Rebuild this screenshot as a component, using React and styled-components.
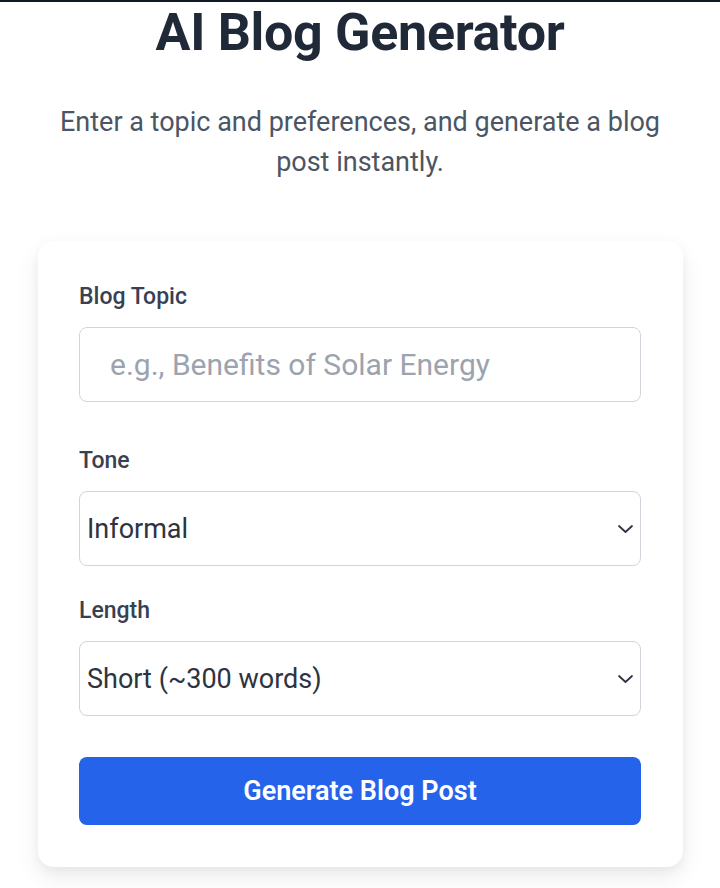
import React, { useState } from 'react';
import styled, { createGlobalStyle } from 'styled-components';

const GlobalStyle = createGlobalStyle`
  html, body {
    margin: 0;
    padding: 0;
    background: #ffffff;
    font-family: Roboto, "Liberation Sans", Arial, sans-serif;
  }
  * { box-sizing: border-box; }
`;

const Page = styled.div`
  width: 720px;
  min-height: 888px;
  border-top: 2px solid #111827;
  display: flex;
  flex-direction: column;
  align-items: center;
`;

const Title = styled.h1`
  margin: 0;
  font-size: 52px;
  line-height: 62px;
  font-weight: 700;
  color: #1f2937;
  letter-spacing: -0.3px;
`;

const Subtitle = styled.p`
  margin: 38px 0 0;
  width: 620px;
  text-align: center;
  font-size: 27px;
  line-height: 40px;
  color: #4b5563;
`;

const Card = styled.form`
  margin-top: 59px;
  width: 645px;
  margin-left: 1px;
  background: #ffffff;
  border-radius: 16px;
  box-shadow: 0 10px 25px rgba(0, 0, 0, 0.08), 0 4px 10px rgba(0, 0, 0, 0.04);
  padding: 41px 42px 42px 41px;
  display: flex;
  flex-direction: column;
`;

const Field = styled.div`
  display: flex;
  flex-direction: column;
  margin-bottom: ${({ gap }) => gap}px;
`;

const Label = styled.label`
  font-size: 23px;
  line-height: 30px;
  font-weight: 500;
  color: #374151;
  margin-bottom: 15px;
`;

const TextInput = styled.input`
  height: 75px;
  border: 1px solid #d1d5db;
  border-radius: 8px;
  padding: 0 30px;
  font-family: inherit;
  font-size: 30px;
  color: #111827;
  outline: none;
  &::placeholder {
    color: #9ca3af;
  }
`;

const SelectWrap = styled.div`
  position: relative;
  height: 75px;
`;

const Select = styled.select`
  appearance: none;
  width: 100%;
  height: 100%;
  border: 1px solid #d1d5db;
  border-radius: 8px;
  background: #ffffff;
  padding: 0 40px 0 7px;
  font-family: inherit;
  font-size: 27px;
  color: #2d3440;
  outline: none;
`;

const Chevron = styled.svg`
  position: absolute;
  right: 7px;
  top: 50%;
  transform: translateY(-50%);
  pointer-events: none;
`;

const Button = styled.button`
  height: 68px;
  border: none;
  border-radius: 8px;
  background: #2563eb;
  color: #ffffff;
  font-family: inherit;
  font-size: 27px;
  font-weight: 600;
  cursor: pointer;
`;

const Dropdown = ({ value, options, onChange }) => (
  <SelectWrap>
    <Select value={value} onChange={(e) => onChange(e.target.value)}>
      {options.map((o) => <option key={o}>{o}</option>)}
    </Select>
    <Chevron width="17" height="10" viewBox="0 0 17 10" fill="none">
      <polyline points="2,2 8.5,8 15,2" stroke="#2d3440" strokeWidth="1.8" strokeLinecap="round" strokeLinejoin="round" />
    </Chevron>
  </SelectWrap>
);

export default function App() {
  const [topic, setTopic] = useState('');
  const [tone, setTone] = useState('Informal');
  const [length, setLength] = useState('Short (~300 words)');

  return (
    <Page>
      <GlobalStyle />
      <Title>AI Blog Generator</Title>
      <Subtitle>Enter a topic and preferences, and generate a blog post instantly.</Subtitle>
      <Card onSubmit={(e) => e.preventDefault()}>
        <Field gap={44}>
          <Label>Blog Topic</Label>
          <TextInput
            value={topic}
            onChange={(e) => setTopic(e.target.value)}
            placeholder="e.g., Benefits of Solar Energy"
          />
        </Field>
        <Field gap={30}>
          <Label>Tone</Label>
          <Dropdown value={tone} onChange={setTone} options={['Informal', 'Formal', 'Friendly', 'Professional']} />
        </Field>
        <Field gap={41}>
          <Label>Length</Label>
          <Dropdown value={length} onChange={setLength} options={['Short (~300 words)', 'Medium (~600 words)', 'Long (~1000 words)']} />
        </Field>
        <Button type="submit">Generate Blog Post</Button>
      </Card>
    </Page>
  );
}
